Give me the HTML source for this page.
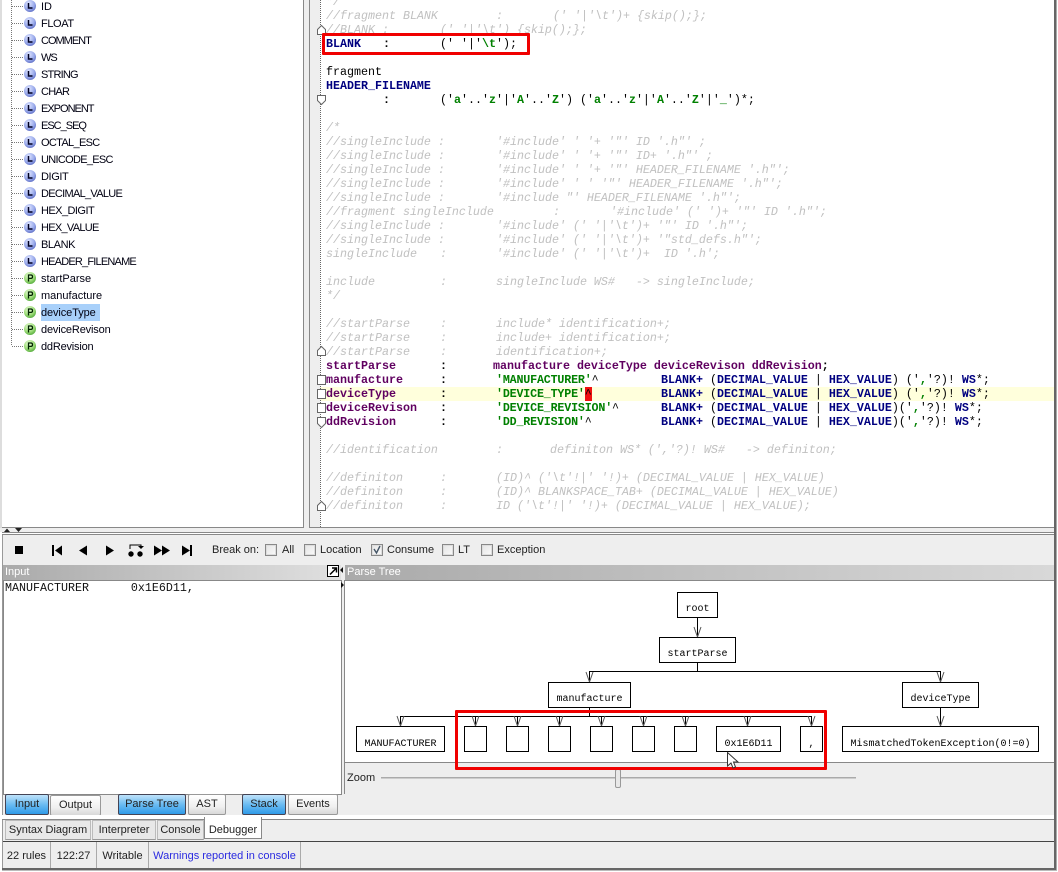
<!DOCTYPE html>
<html><head><meta charset="utf-8"><style>
html,body{margin:0;padding:0;background:#fff}
#r{position:relative;width:1058px;height:872px;overflow:hidden;background:#fff;font-family:"Liberation Sans",sans-serif;font-size:11px;color:#111}
.a{position:absolute}
.t{position:absolute;left:41px;height:17px;line-height:17px;font-size:11px;white-space:pre;color:#001;margin-top:2px}
.c{position:absolute;left:0;width:1058px;height:14px;font:11.67px/14px "Liberation Mono",monospace;white-space:pre;margin-top:1px}
.c span{position:absolute;white-space:pre}
.g{color:#c0c0c0;font-style:italic}
.k{color:#000}
.n{color:#000080;font-weight:bold}
.p{color:#600060;font-weight:bold}
.s{color:#008000;font-weight:bold}
.q{letter-spacing:-.17px}
.b{font-weight:bold;color:#000}
.w{font-weight:normal;color:#000}
.btn{position:absolute;height:19px;line-height:19px;text-align:center;font-size:11px;border:1px solid #999;border-radius:2px;background:linear-gradient(#fff,#f0f0f0 60%,#d8d8d8);color:#222}
.on{border-color:#445;background:linear-gradient(#bfe2fa,#6bbcf2 50%,#2f9ae8)}
.tab{position:absolute;height:18px;line-height:18px;top:820px;text-align:center;font-size:11px;background:#e8e8e8;border:1px solid #bbb;border-bottom:1px solid #999;color:#222}
.st{position:absolute;top:842px;height:27px;line-height:29px;font-size:11px;border-right:1px solid #aaa;text-align:center;color:#222}
.lb{position:absolute;font-size:11px;top:543px;line-height:14px;color:#222}
.cb{position:absolute;top:544px;width:10px;height:10px;border:1px solid #888;background:linear-gradient(135deg,#e4e4e4,#fafafa);box-shadow:inset 0 0 0 1px #ddd}
.box{fill:#fff;stroke:#000;stroke-width:1}
.tx{font:10px "Liberation Mono",monospace;fill:#000;text-anchor:middle}
</style></head><body><div id="r">

<!-- tree pane -->
<div class="a" style="left:0;top:0;width:2px;height:528px;background:#ddd"></div>
<div class="a" style="left:303px;top:0;width:1px;height:528px;background:#888"></div>
<div class="a" style="left:304px;top:0;width:5px;height:528px;background:#eee"></div>
<div class="a" style="left:2px;top:527px;width:302px;height:1px;background:#888"></div>
<svg class="a" style="left:0;top:0" width="303" height="360">
<defs>
<radialGradient id="bl" cx="40%" cy="30%" r="75%"><stop offset="0" stop-color="#e0e6ff"/><stop offset="0.6" stop-color="#9cacec"/><stop offset="1" stop-color="#5c6cc4"/></radialGradient>
<radialGradient id="gr" cx="40%" cy="30%" r="75%"><stop offset="0" stop-color="#eaffd8"/><stop offset="0.6" stop-color="#9cdc78"/><stop offset="1" stop-color="#50a838"/></radialGradient>
<g id="L"><circle r="6" fill="url(#bl)"/><path d="M-1.500-3V2H2.500" fill="none" stroke="#002" stroke-width="1.500"/></g>
<g id="P"><circle r="6" fill="url(#gr)"/><path d="M-1.500 3.500V-3H1Q2.500-3 2.500-1.300T1 .4H-1.500" fill="none" stroke="#020" stroke-width="1.300"/></g>
</defs>
<path d="M11.500 0V346M12 6.500H24M12 23.500H24M12 40.500H24M12 57.500H24M12 74.500H24M12 91.500H24M12 108.500H24M12 125.500H24M12 142.500H24M12 159.500H24M12 176.500H24M12 193.500H24M12 210.500H24M12 227.500H24M12 244.500H24M12 261.500H24M12 278.500H24M12 295.500H24M12 312.500H24M12 329.500H24M12 346.500H24" stroke="#777" stroke-dasharray="1 1" fill="none"/>
<use href="#L" x="30" y="6"/><use href="#L" x="30" y="23"/><use href="#L" x="30" y="40"/><use href="#L" x="30" y="57"/><use href="#L" x="30" y="74"/><use href="#L" x="30" y="91"/><use href="#L" x="30" y="108"/><use href="#L" x="30" y="125"/><use href="#L" x="30" y="142"/><use href="#L" x="30" y="159"/><use href="#L" x="30" y="176"/><use href="#L" x="30" y="193"/><use href="#L" x="30" y="210"/><use href="#L" x="30" y="227"/><use href="#L" x="30" y="244"/><use href="#L" x="30" y="261"/>
<use href="#P" x="30" y="278"/><use href="#P" x="30" y="295"/><use href="#P" x="30" y="312"/><use href="#P" x="30" y="329"/><use href="#P" x="30" y="346"/>
</svg>
<div class="a" style="left:41px;top:304px;width:59px;height:17px;background:#a8d0fa"></div>
<div class="t" style="top:-3px">ID</div><div class="t" style="top:14px;letter-spacing:-.4px">FLOAT</div><div class="t" style="top:31px;letter-spacing:-1px">COMMENT</div><div class="t" style="top:48px;letter-spacing:-1px">WS</div><div class="t" style="top:65px;letter-spacing:-.8px">STRING</div><div class="t" style="top:82px;letter-spacing:-.75px">CHAR</div><div class="t" style="top:99px;letter-spacing:-1px">EXPONENT</div><div class="t" style="top:116px;letter-spacing:-1px">ESC_SEQ</div><div class="t" style="top:133px;letter-spacing:-.67px">OCTAL_ESC</div><div class="t" style="top:150px;letter-spacing:-.7px">UNICODE_ESC</div><div class="t" style="top:167px;letter-spacing:-.4px">DIGIT</div><div class="t" style="top:184px;letter-spacing:-.7px">DECIMAL_VALUE</div><div class="t" style="top:201px;letter-spacing:-.55px">HEX_DIGIT</div><div class="t" style="top:218px;letter-spacing:-.7px">HEX_VALUE</div><div class="t" style="top:235px;letter-spacing:-.4px">BLANK</div><div class="t" style="top:252px;letter-spacing:-.8px">HEADER_FILENAME</div><div class="t" style="top:269px">startParse</div><div class="t" style="top:286px">manufacture</div><div class="t" style="top:303px;letter-spacing:-.1px">deviceType</div><div class="t" style="top:320px;letter-spacing:-.15px">deviceRevison</div><div class="t" style="top:337px;letter-spacing:-.2px">ddRevision</div>

<!-- editor -->
<div class="a" style="left:309px;top:0;width:1px;height:528px;background:#888"></div>
<div class="a" style="left:310px;top:0;width:10px;height:527px;background:#eee"></div>
<div class="a" style="left:320px;top:387px;width:734px;height:14px;background:#ffffdc"></div>
<div class="a" style="left:585px;top:387px;width:7px;height:14px;background:#f01010"></div>
<svg class="a" style="left:310px;top:0" width="20" height="528">
<path d="M10.500 0V527" stroke="#666" stroke-dasharray="1 1"/>
<g fill="#fff" stroke="#666">
<path d="M7.500 34.500V29.500L11.500 25.500 15.500 29.500V34.500Z"/>
<path d="M7.500 95.500V100.500L11.500 104.500 15.500 100.500V95.500Z"/>
<path d="M7.500 355.500V350.500L11.500 346.500 15.500 350.500V355.500Z"/>
<rect x="7.500" y="375.500" width="8" height="9"/>
<rect x="7.500" y="389.500" width="8" height="9"/>
<rect x="7.500" y="403.500" width="8" height="9"/>
<path d="M7.500 417.500V423.500L11.500 427.500 15.500 423.500V417.500Z"/>
<path d="M7.500 510.500V505.500L11.500 501.500 15.500 505.500V510.500Z"/>
</g></svg>

<div class="c" style="top:-6px"><span class="g" style="left:326px">*/</span></div>
<div class="c" style="top:8px"><span class="g" style="left:326px">//fragment BLANK</span><span class="g" style="left:496px">:</span><span class="g" style="left:553px">(' '|'\t')+ {skip();};</span></div>
<div class="c" style="top:22px"><span class="g" style="left:326px">//BLANK :</span><span class="g" style="left:440px">(' '|'\t') {skip();};</span></div>
<div class="c" style="top:36px"><span class="n" style="left:326px">BLANK</span><span class="b" style="left:383px">:</span><span class="k" style="left:440px">(' '|'<b class="s">\t</b>');</span></div>
<div class="c" style="top:64px"><span class="k" style="left:326px">fragment</span></div>
<div class="c" style="top:78px"><span class="n" style="left:326px">HEADER_FILENAME</span></div>
<div class="c" style="top:92px"><span class="b" style="left:383px">:</span><span class="k" style="left:440px">('<b class="s">a</b>'..'<b class="s">z</b>'|'<b class="s">A</b>'..'<b class="s">Z</b>') ('<b class="s">a</b>'..'<b class="s">z</b>'|'<b class="s">A</b>'..'<b class="s">Z</b>'|'<b class="s">_</b>')*;</span></div>
<div class="c" style="top:120px"><span class="g" style="left:326px">/*</span></div>
<div class="c" style="top:134px"><span class="g" style="left:326px">//singleInclude :</span><span class="g" style="left:496px">'#include' ' '+ '"' ID '.h"' ;</span></div>
<div class="c" style="top:148px"><span class="g" style="left:326px">//singleInclude :</span><span class="g" style="left:496px">'#include' ' '+ '"' ID+ '.h"' ;</span></div>
<div class="c" style="top:162px"><span class="g" style="left:326px">//singleInclude :</span><span class="g" style="left:496px">'#include' ' '+ '"' HEADER_FILENAME '.h"';</span></div>
<div class="c" style="top:176px"><span class="g" style="left:326px">//singleInclude :</span><span class="g" style="left:496px">'#include' ' ' '"' HEADER_FILENAME '.h"';</span></div>
<div class="c" style="top:190px"><span class="g" style="left:326px">//singleInclude :</span><span class="g" style="left:496px">'#include "' HEADER_FILENAME '.h"';</span></div>
<div class="c" style="top:204px"><span class="g" style="left:326px">//fragment singleInclude</span><span class="g" style="left:553px">:</span><span class="g" style="left:610px">'#include' (' ')+ '"' ID '.h"';</span></div>
<div class="c" style="top:218px"><span class="g" style="left:326px">//singleInclude :</span><span class="g" style="left:496px">'#include' (' '|'\t')+ '"' ID '.h"';</span></div>
<div class="c" style="top:232px"><span class="g" style="left:326px">//singleInclude :</span><span class="g" style="left:496px">'#include' (' '|'\t')+ '"std_defs.h"';</span></div>
<div class="c" style="top:246px"><span class="g" style="left:326px">singleInclude</span><span class="g" style="left:440px">:</span><span class="g" style="left:496px">'#include' (' '|'\t')+  ID '.h';</span></div>
<div class="c" style="top:274px"><span class="g" style="left:326px">include</span><span class="g" style="left:440px">:</span><span class="g" style="left:496px">singleInclude WS#   -&gt; singleInclude;</span></div>
<div class="c" style="top:288px"><span class="g" style="left:326px">*/</span></div>
<div class="c" style="top:316px"><span class="g" style="left:326px">//startParse</span><span class="g" style="left:440px">:</span><span class="g" style="left:496px">include* identification+;</span></div>
<div class="c" style="top:330px"><span class="g" style="left:326px">//startParse</span><span class="g" style="left:440px">:</span><span class="g" style="left:496px">include+ identification+;</span></div>
<div class="c" style="top:344px"><span class="g" style="left:326px">//startParse</span><span class="g" style="left:440px">:</span><span class="g" style="left:496px">identification+;</span></div>
<div class="c" style="top:358px"><span class="p" style="left:326px">startParse</span><span class="b" style="left:440px">:</span><span class="p" style="left:493px">manufacture deviceType deviceRevison ddRevision<b class="b">;</b></span></div>
<div class="c" style="top:372px"><span class="p" style="left:326px">manufacture</span><span class="b" style="left:440px">:</span><span class="s q" style="left:496px">'MANUFACTURER'<b class="w">^</b></span><span class="n" style="left:661px">BLANK+ <b class="w">(</b>DECIMAL_VALUE <b class="w">|</b> HEX_VALUE<b class="w">) ('</b><b class="s">,</b><b class="w">'?)!</b> WS<b class="w">*;</b></span></div>
<div class="c" style="top:386px"><span class="p" style="left:326px">deviceType</span><span class="b" style="left:440px">:</span><span class="s q" style="left:496px">'DEVICE_TYPE'<b class="w">^</b></span><span class="n" style="left:661px">BLANK+ <b class="w">(</b>DECIMAL_VALUE <b class="w">|</b> HEX_VALUE<b class="w">) ('</b><b class="s">,</b><b class="w">'?)!</b> WS<b class="w">*;</b></span></div>
<div class="c" style="top:400px"><span class="p" style="left:326px">deviceRevison</span><span class="b" style="left:440px">:</span><span class="s q" style="left:496px">'DEVICE_REVISION'<b class="w">^</b></span><span class="n" style="left:661px">BLANK+ <b class="w">(</b>DECIMAL_VALUE <b class="w">|</b> HEX_VALUE<b class="w">)('</b><b class="s">,</b><b class="w">'?)!</b> WS<b class="w">*;</b></span></div>
<div class="c" style="top:414px"><span class="p" style="left:326px">ddRevision</span><span class="b" style="left:440px">:</span><span class="s q" style="left:496px">'DD_REVISION'<b class="w">^</b></span><span class="n" style="left:661px">BLANK+ <b class="w">(</b>DECIMAL_VALUE <b class="w">|</b> HEX_VALUE<b class="w">)('</b><b class="s">,</b><b class="w">'?)!</b> WS<b class="w">*;</b></span></div>
<div class="c" style="top:442px"><span class="g" style="left:326px">//identification</span><span class="g" style="left:496px">:</span><span class="g" style="left:550px">definiton WS* (','?)! WS#   -&gt; definiton;</span></div>
<div class="c" style="top:470px"><span class="g" style="left:326px">//definiton</span><span class="g" style="left:440px">:</span><span class="g" style="left:496px">(ID)^ ('\t'!|' '!)+ (DECIMAL_VALUE | HEX_VALUE)</span></div>
<div class="c" style="top:484px"><span class="g" style="left:326px">//definiton</span><span class="g" style="left:440px">:</span><span class="g" style="left:496px">(ID)^ BLANKSPACE_TAB+ (DECIMAL_VALUE | HEX_VALUE)</span></div>
<div class="c" style="top:498px"><span class="g" style="left:326px">//definiton</span><span class="g" style="left:440px">:</span><span class="g" style="left:496px">ID ('\t'!|' '!)+ (DECIMAL_VALUE | HEX_VALUE);</span></div>
<div class="a" style="left:309px;top:527px;width:746px;height:1px;background:#888"></div>

<!-- splitter -->
<div class="a" style="left:0;top:528px;width:1055px;height:4px;background:#eee"></div>
<div class="a" style="left:2px;top:532px;width:1053px;height:1px;background:#888"></div>
<div class="a" style="left:2px;top:534px;width:1053px;height:1px;background:#888"></div>
<svg class="a" style="left:0;top:527px" width="30" height="6"><path d="M4 5L7 1.500 10 5ZM15 1H22L18.500 5Z" fill="#222"/></svg>

<!-- lower bg -->
<div class="a" style="left:2px;top:535px;width:1052px;height:280px;background:#eee"></div>
<div class="a" style="left:2px;top:535px;width:1px;height:334px;background:#999"></div>

<!-- toolbar icons -->
<svg class="a" style="left:0;top:538px" width="200" height="24" fill="#000">
<rect x="15" y="8" width="8" height="8"/>
<rect x="52" y="7" width="2" height="11"/><path d="M55 12.500L62 7.500V17.500Z"/>
<path d="M79 12.500L87 7.500V17.500Z"/>
<path d="M106 7.500L114 12.500 106 17.500Z"/>
<circle cx="131" cy="16" r="2.700"/><circle cx="140" cy="16" r="2.700"/><path d="M130 11V7H141V9" fill="none" stroke="#000"/><path d="M138 8H144L141 11Z"/>
<path d="M154 7.500L162 12.500 154 17.500ZM162 7.500L170 12.500 162 17.500Z"/>
<path d="M182 7.500L190 12.500 182 17.500Z"/><rect x="190" y="7" width="2" height="11"/>
</svg>
<div class="lb" style="left:212px">Break on:</div>
<div class="cb" style="left:265px"></div><div class="lb" style="left:282px">All</div>
<div class="cb" style="left:304px"></div><div class="lb" style="left:320px">Location</div>
<div class="cb" style="left:371px"></div><div class="lb" style="left:387px">Consume</div>
<svg class="a" style="left:371px;top:544px" width="12" height="12"><path d="M3 5L5.500 9 9 2" fill="none" stroke="#456" stroke-width="1.400"/></svg>
<div class="cb" style="left:442px"></div><div class="lb" style="left:458px">LT</div>
<div class="cb" style="left:481px"></div><div class="lb" style="left:497px">Exception</div>

<!-- input pane -->
<div class="a" style="left:3px;top:565px;width:338px;height:15px;background:linear-gradient(90deg,#aaa,#e0e0e0);color:#fff;font-size:11px;line-height:15px;text-indent:2px">Input</div>
<div class="a" style="left:3px;top:580px;width:337px;height:213px;background:#fff;border:1px solid #888"></div>
<div class="a" style="left:5px;top:581px;font:11.67px/14px 'Liberation Mono',monospace;white-space:pre;color:#111">MANUFACTURER      0x1E6D11,</div>
<svg class="a" style="left:327px;top:565px" width="13" height="13"><rect x=".5" y=".5" width="11" height="11" fill="#fff" stroke="#000"/><path d="M3 9.500L9 3.500M5 3H9.500V7.500" fill="none" stroke="#000" stroke-width="1.500"/></svg>
<svg class="a" style="left:340px;top:565px" width="6" height="40"><path d="M3 2L0 5 3 8ZM1 17L4 20 1 23Z" fill="#111"/></svg>

<!-- parse tree pane -->
<div class="a" style="left:345px;top:565px;width:709px;height:15px;background:linear-gradient(90deg,#aaa,#d8d8d8);color:#fff;font-size:11px;line-height:15px;text-indent:2px">Parse Tree</div>
<div class="a" style="left:345px;top:580px;width:709px;height:1px;background:#888"></div>
<div class="a" style="left:344px;top:580px;width:1px;height:214px;background:#888"></div>
<div class="a" style="left:345px;top:581px;width:709px;height:181px;background:#fff;border-bottom:1px solid #888"></div>
<svg class="a" style="left:340px;top:580px" width="714" height="190">
<g fill="none" stroke-width="1">
<path stroke="#000" d="M357.500 37V57M357.500 82V91M249.500 91.500H600.500M249.500 91V102M600.500 91V102M249.500 127V136M60.500 136.500H471.500M60.500 136V146M135.500 136V146M177.500 136V146M219.500 136V146M261.500 136V146M303.500 136V146M345.500 136V146M407.500 136V146M471.500 136V146M600.500 127V146"/>
<path stroke="#555" d="M354 47L357.500 57 361 47M246 92L249.500 102 253 92M597 92L600.500 102 604 92M57 136L60.500 146 64 136M132 136L135.500 146 139 136M174 136L177.500 146 181 136M216 136L219.500 146 223 136M258 136L261.500 146 265 136M300 136L303.500 146 307 136M342 136L345.500 146 349 136M404 136L407.500 146 411 136M468 136L471.500 146 475 136M597 136L600.500 146 604 136"/>
</g>
<rect class="box" x="337.500" y="12.500" width="40" height="25"/>
<rect class="box" x="319.500" y="57.500" width="76" height="25"/>
<rect class="box" x="208.500" y="102.500" width="82" height="25"/>
<rect class="box" x="562.500" y="102.500" width="76" height="25"/>
<rect class="box" x="16.500" y="146.500" width="88" height="25"/>
<rect class="box" x="124.500" y="146.500" width="22" height="25"/>
<rect class="box" x="166.500" y="146.500" width="22" height="25"/>
<rect class="box" x="208.500" y="146.500" width="22" height="25"/>
<rect class="box" x="250.500" y="146.500" width="22" height="25"/>
<rect class="box" x="292.500" y="146.500" width="22" height="25"/>
<rect class="box" x="334.500" y="146.500" width="22" height="25"/>
<rect class="box" x="376.500" y="146.500" width="64" height="25"/>
<rect class="box" x="460.500" y="146.500" width="22" height="25"/>
<rect class="box" x="502.500" y="146.500" width="196" height="25"/>
<text class="tx" x="357.500" y="31">root</text>
<text class="tx" x="357.500" y="76">startParse</text>
<text class="tx" x="249.500" y="121">manufacture</text>
<text class="tx" x="600.500" y="121">deviceType</text>
<text class="tx" x="60.500" y="166" font-weight="bold">MANUFACTURER</text>
<text class="tx" x="408.500" y="166">0x1E6D11</text>
<text class="tx" x="471.500" y="166">,</text>
<text class="tx" x="600.500" y="166">MismatchedTokenException(0!=0)</text>
</svg>

<!-- zoom -->
<div class="a" style="left:347px;top:771px;font-size:11px;line-height:14px;color:#222">Zoom</div>
<div class="a" style="left:381px;top:777px;width:475px;height:1px;background:#aaa;border-bottom:1px solid #ccc"></div>
<div class="a" style="left:615px;top:769px;width:4px;height:17px;background:#e8e8e8;border:1px solid #999;border-radius:2px"></div>

<!-- red rects -->
<div class="a" style="left:322px;top:33px;width:202px;height:16px;border:3px solid #f00000;border-radius:1px"></div>
<div class="a" style="left:455px;top:710px;width:366px;height:54px;border:3px solid #f00000;border-radius:1px"></div>

<!-- cursor -->
<svg class="a" style="left:725px;top:751px" width="16" height="20"><path d="M2.500 1.500V15L6 12 8 17 10.500 16 8.500 11H13Z" fill="#fff" stroke="#333"/></svg>

<!-- buttons -->
<div class="btn on" style="left:5px;top:794px;width:42px">Input</div>
<div class="btn" style="left:50px;top:795px;width:49px">Output</div>
<div class="btn on" style="left:118px;top:794px;width:66px">Parse Tree</div>
<div class="btn" style="left:188px;top:794px;width:36px">AST</div>
<div class="btn on" style="left:242px;top:794px;width:42px">Stack</div>
<div class="btn" style="left:288px;top:794px;width:48px">Events</div>

<!-- tabs -->
<div class="a" style="left:2px;top:815px;width:1052px;height:4px;background:#fff"></div>
<div class="a" style="left:2px;top:819px;width:1052px;height:1px;background:#888"></div>
<div class="a" style="left:3px;top:820px;width:1051px;height:21px;background:#eee"></div>
<div class="tab" style="left:5px;width:84px">Syntax Diagram</div>
<div class="tab" style="left:92px;width:62px">Interpreter</div>
<div class="tab" style="left:157px;width:45px">Console</div>
<div class="a" style="left:204px;top:817px;width:58px;height:22px;background:#fff;border-right:1px solid #888;border-left:1px solid #888;border-bottom:1px solid #888;box-sizing:border-box;text-align:center;line-height:26px;font-size:11px;color:#222">Debugger</div>

<!-- status -->
<div class="a" style="left:3px;top:841px;width:1051px;height:1px;background:#444"></div>
<div class="a" style="left:3px;top:842px;width:1051px;height:27px;background:#eee"></div>
<div class="st" style="left:3px;width:47px">22 rules</div>
<div class="st" style="left:51px;width:45px">122:27</div>
<div class="st" style="left:97px;width:51px">Writable</div>
<div class="st" style="left:149px;width:151px;color:#2a2ae0">Warnings reported in console</div>

<!-- window edge -->
<div class="a" style="left:1054px;top:0;width:2px;height:870px;background:#666"></div>
<div class="a" style="left:1056px;top:0;width:1px;height:871px;background:#aaa"></div>
<div class="a" style="left:2px;top:868px;width:1054px;height:2px;background:#666"></div>
<div class="a" style="left:2px;top:870px;width:1055px;height:1px;background:#bbb"></div>
</div></body></html>
